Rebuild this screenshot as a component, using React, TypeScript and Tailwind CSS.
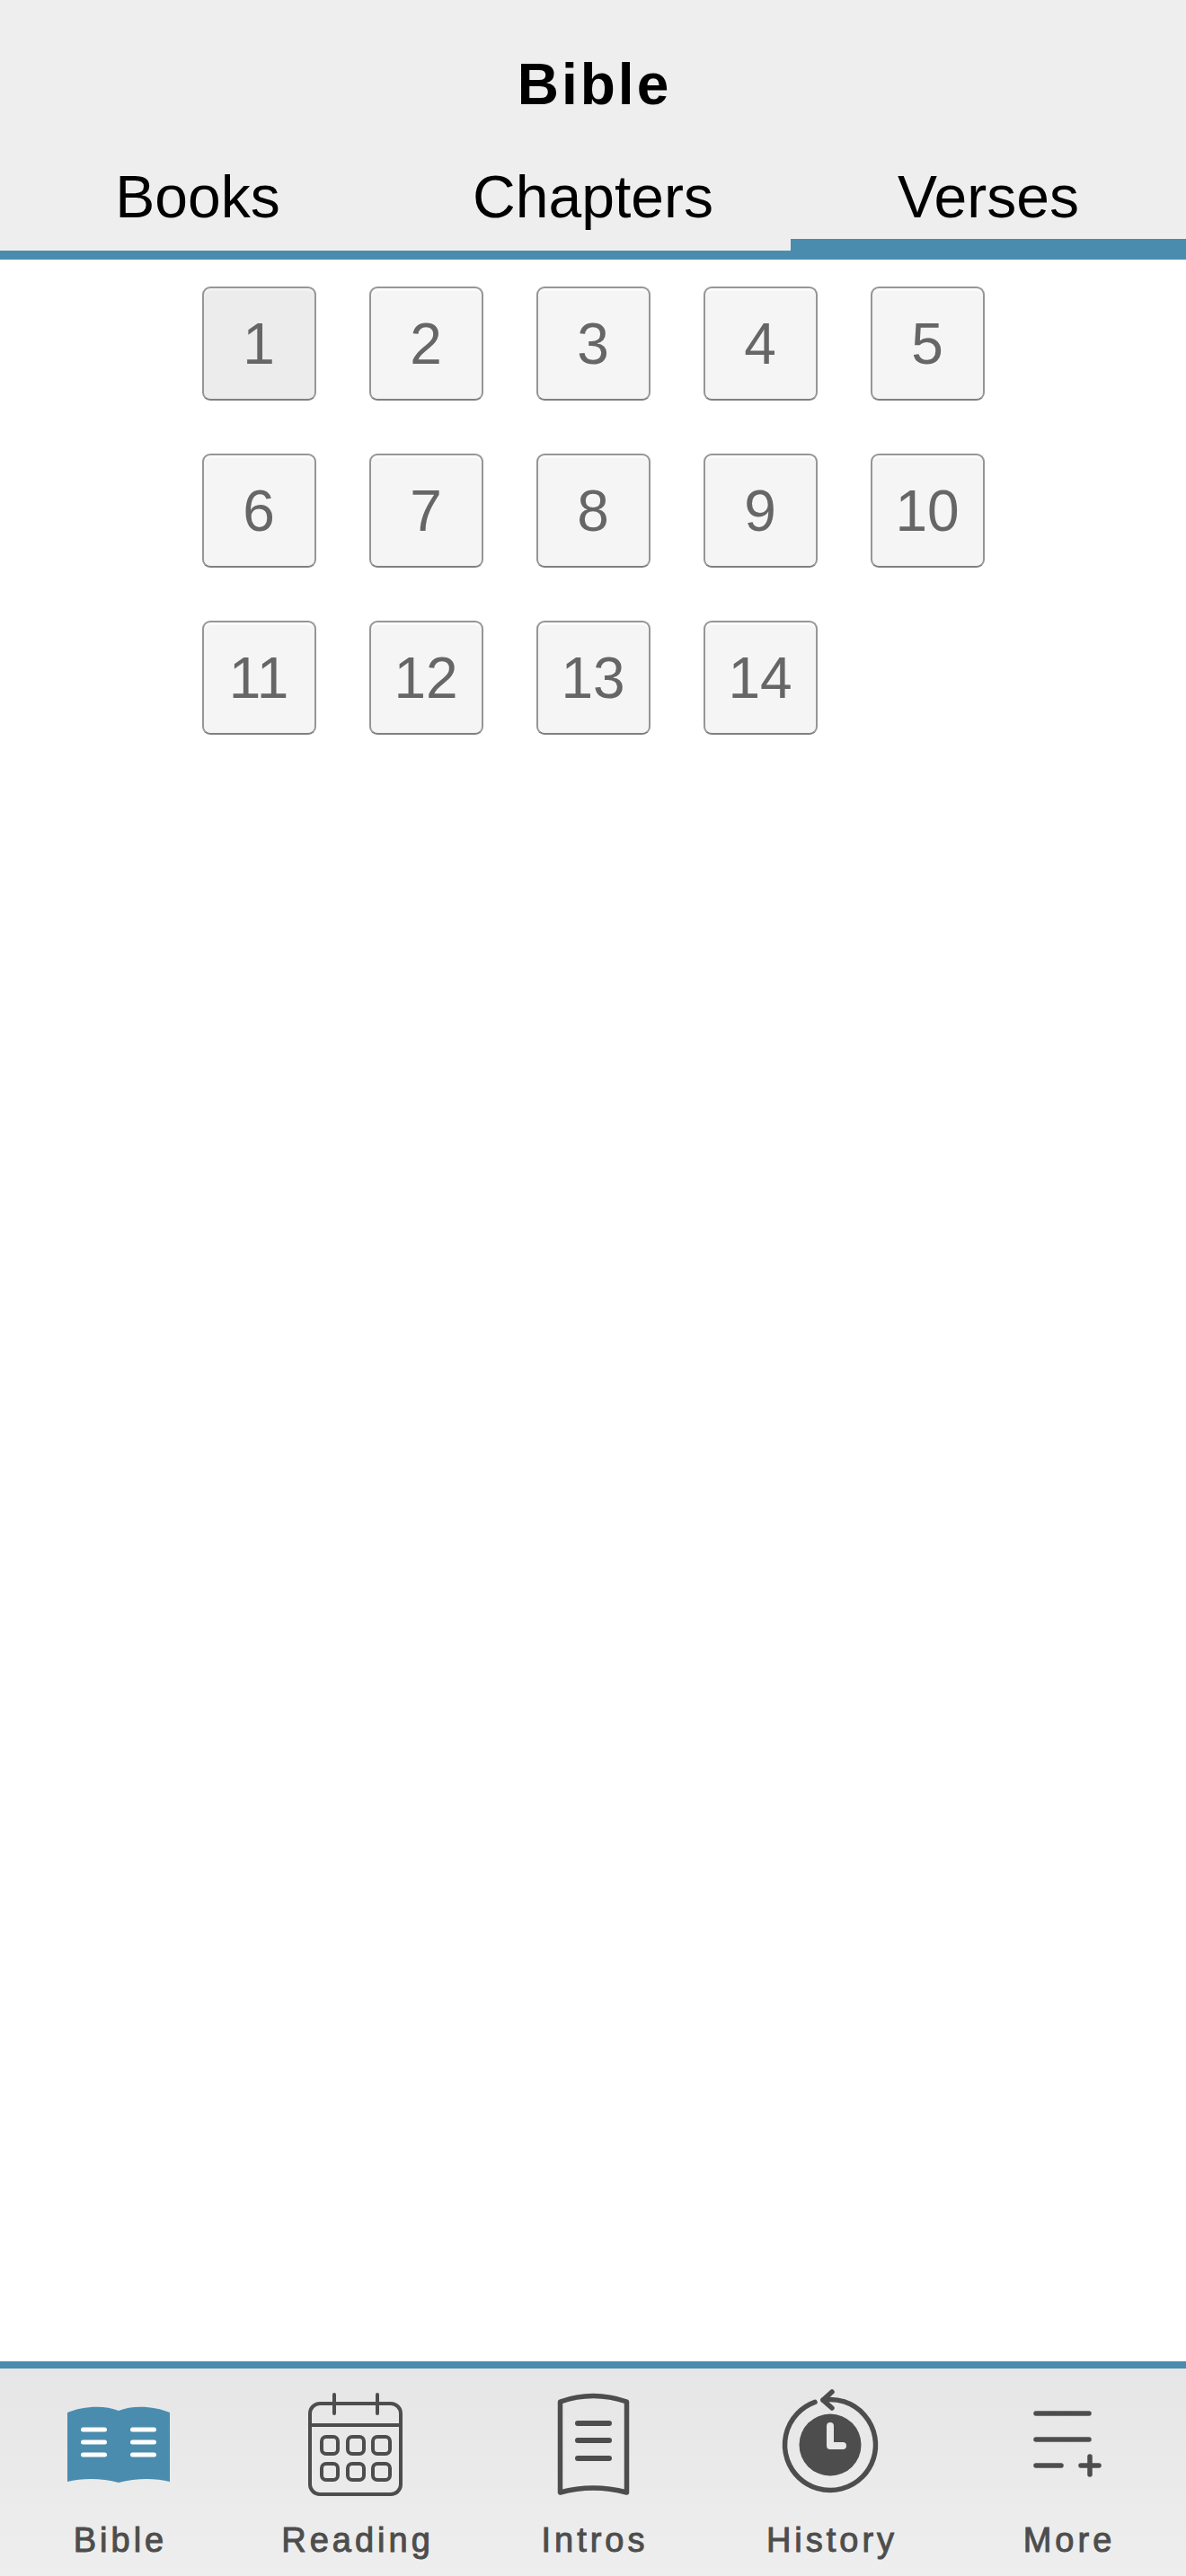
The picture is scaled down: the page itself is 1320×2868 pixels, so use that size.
const verses = [1, 2, 3, 4, 5, 6, 7, 8, 9, 10, 11, 12, 13, 14]

function BibleIcon() {
  return (
    <svg width="132" height="132" viewBox="0 0 132 132" fill="none">
      <path d="M9 32C25 25 50 23 66 30C82 23 107 25 123 32V109C107 105 85 105 66 110C48 105 25 105 9 109Z" fill="#4a8cae" />
      <path d="M26.5 51H50.5M26.5 65H50.5M26.5 79H50.5M81.5 51H105.5M81.5 65H105.5M81.5 79H105.5" stroke="#fff" strokeWidth="5" strokeLinecap="round" />
    </svg>
  )
}

function ReadingIcon() {
  return (
    <svg width="132" height="132" viewBox="0 0 132 132" fill="none" stroke="#4d4d4d" strokeWidth="4" strokeLinecap="round">
      <rect x="15" y="22" width="101" height="101" rx="11" />
      <path d="M42 12V33M90 12V33M15 46H116" />
      <rect x="28" y="59" width="18" height="19" rx="5" />
      <rect x="57" y="59" width="18" height="19" rx="5" />
      <rect x="85" y="59" width="19" height="19" rx="5" />
      <rect x="28" y="89" width="18" height="18" rx="5" />
      <rect x="57" y="89" width="18" height="18" rx="5" />
      <rect x="85" y="89" width="19" height="18" rx="5" />
    </svg>
  )
}

function IntrosIcon() {
  return (
    <svg width="132" height="132" viewBox="0 0 132 132" fill="none" stroke="#4d4d4d" strokeLinecap="round">
      <path d="M29.5 121V20Q66 7 103.5 20V121Q66 111 29.5 121Z" strokeWidth="5.5" strokeLinejoin="round" />
      <path d="M49 44H84M49 63H84M49 83H84" strokeWidth="6" />
    </svg>
  )
}

function HistoryIcon() {
  return (
    <svg width="132" height="132" viewBox="0 0 132 132" fill="none" stroke="#4d4d4d" strokeLinecap="round" strokeLinejoin="round">
      <path d="M49 20.45A50.5 50.5 0 1 0 58 18.14" strokeWidth="5.5" />
      <path d="M68 9L58 18.14L68 27" strokeWidth="5.5" />
      <circle cx="66" cy="68" r="34.5" fill="#4d4d4d" stroke="none" />
      <path d="M66 47V69H80" stroke="#e8e8e8" strokeWidth="8" />
    </svg>
  )
}

function MoreIcon() {
  return (
    <svg width="132" height="132" viewBox="0 0 132 132" fill="none" stroke="#4d4d4d" strokeWidth="5.5" strokeLinecap="round">
      <path d="M31 33H90M31 62H90M31 91H59M81 91H101M91 81V101" />
    </svg>
  )
}

const navItems = [
  { label: 'Bible', icon: <BibleIcon /> },
  { label: 'Reading', icon: <ReadingIcon /> },
  { label: 'Intros', icon: <IntrosIcon /> },
  { label: 'History', icon: <HistoryIcon /> },
  { label: 'More', icon: <MoreIcon /> },
]

export default function App() {
  return (
    <div className="flex h-[2868px] w-[1320px] flex-col bg-white font-['Liberation_Sans',Arial,sans-serif]">
      <header className="bg-[#eeeeee] pt-[62px]">
        <h1 className="pl-[3px] text-center text-[64px] leading-[64px] font-bold tracking-[3px] text-black">Bible</h1>
        <div className="mt-[60px] grid grid-cols-3">
          <div className="h-[103px] border-b-[10px] border-[#4a8cae] text-center text-[66px] leading-[66px] text-black">Books</div>
          <div className="h-[103px] border-b-[10px] border-[#4a8cae] text-center text-[66px] leading-[66px] text-black">Chapters</div>
          <div className="h-[103px] border-b-[23px] border-[#4a8cae] text-center text-[66px] leading-[66px] text-black">Verses</div>
        </div>
      </header>

      <main className="grid flex-1 grid-cols-[repeat(5,127px)] content-start justify-center gap-[59px] pt-[30px]">
        {verses.map((verse) => (
          <button
            key={verse}
            type="button"
            className={
              verse === 1
                ? 'flex h-[127px] items-center justify-center rounded-[9px] border-2 border-[#969696] border-b-[#808080] bg-[#ececec] text-[64px] text-[#666666] shadow-[inset_0_3px_0_#f2f2f2]'
                : 'flex h-[127px] items-center justify-center rounded-[9px] border-2 border-[#969696] border-b-[#808080] bg-[#f5f5f5] text-[64px] text-[#666666] shadow-[inset_0_3px_0_#fbfbfb]'
            }
          >
            {verse}
          </button>
        ))}
      </main>

      <nav className="grid h-[239px] grid-cols-5 border-t-[8px] border-[#4a8cae] bg-gradient-to-b from-[#e6e6e6] to-[#eeeeee] pt-[17px]">
        {navItems.map((item) => (
          <div key={item.label} className="flex flex-col items-center">
            {item.icon}
            <span className="mt-[23px] pl-[4px] text-[38px] leading-[38px] tracking-[4px] text-[#4d4d4d] [-webkit-text-stroke:1px_#4d4d4d]">{item.label}</span>
          </div>
        ))}
      </nav>
    </div>
  )
}
